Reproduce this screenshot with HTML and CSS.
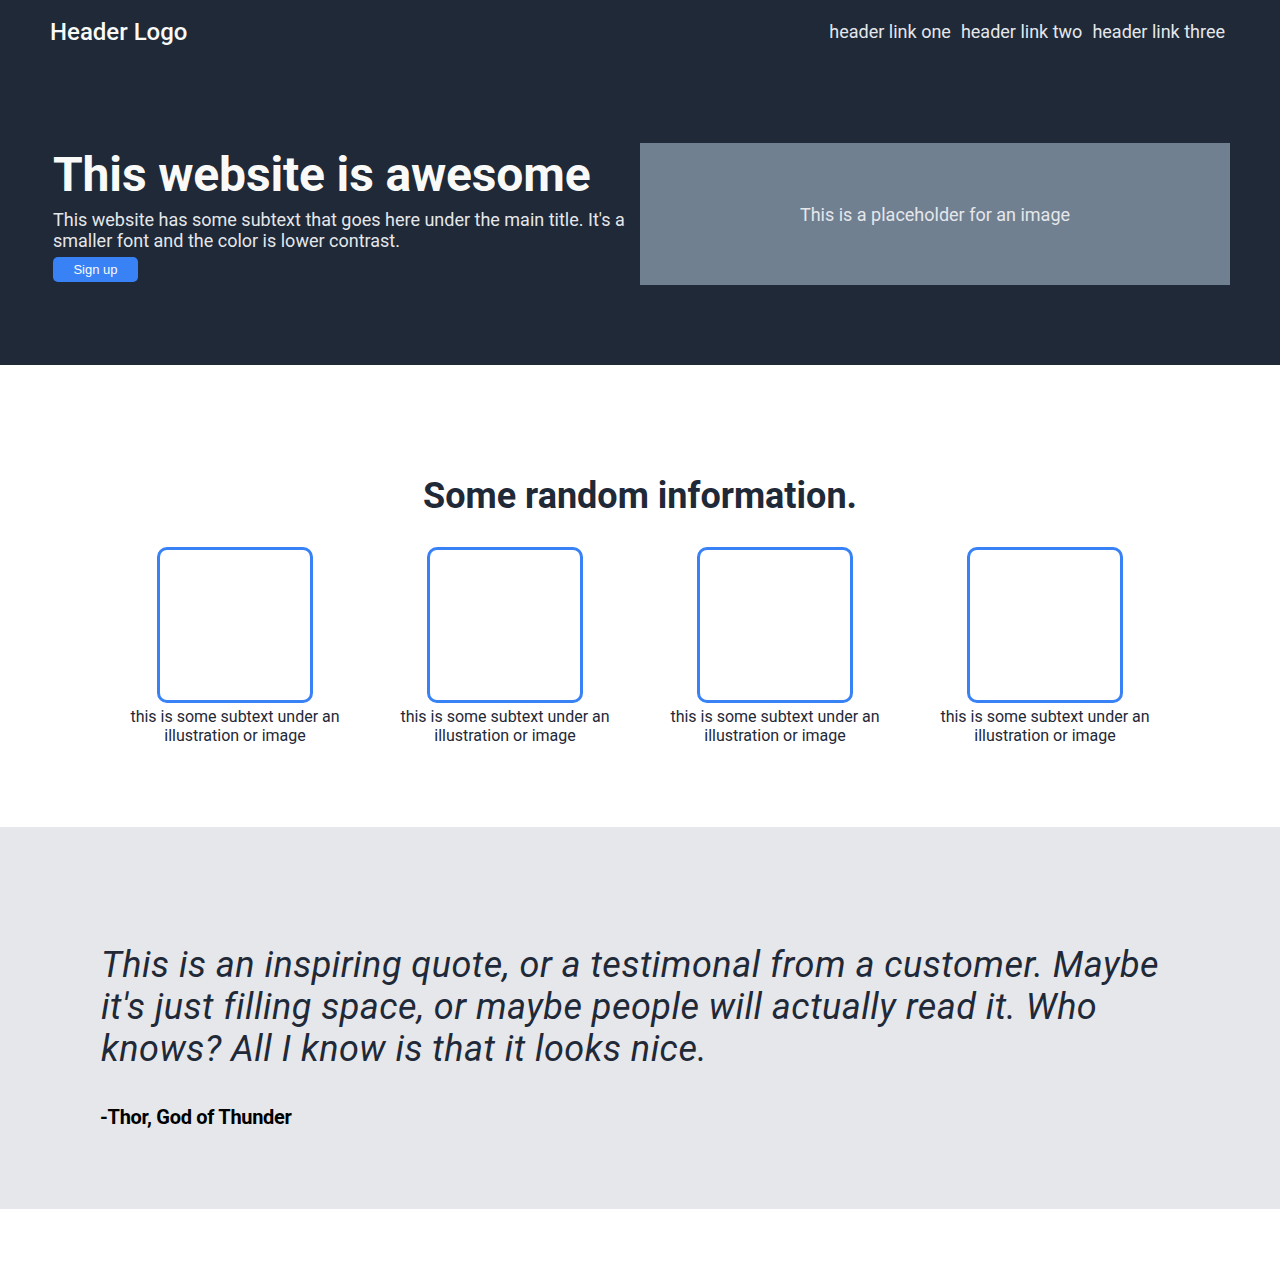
FILE: index.html
```html
<!DOCTYPE html>
<html lang="en">
<head>
<meta charset="UTF-8">
<title>Landing Page</title>
<link rel="stylesheet" href="styles.css">
</head>
<body>
<div class="top">
  <header class="header">
    <div class="logo">Header Logo</div>
    <nav class="links">
      <a href="#">header link one</a>
      <a href="#">header link two</a>
      <a href="#">header link three</a>
    </nav>
  </header>
  <section class="hero">
    <div class="hero-text">
      <h1>This website is awesome</h1>
      <p>This website has some subtext that goes here under the main title. It's a smaller font and the color is lower contrast.</p>
      <button class="signup">Sign up</button>
    </div>
    <div class="placeholder">This is a placeholder for an image</div>
  </section>
</div>
<section class="info">
  <h2>Some random information.</h2>
  <div class="cards">
    <div class="card"><div class="box"></div><p>this is some subtext under an illustration or image</p></div>
    <div class="card"><div class="box"></div><p>this is some subtext under an illustration or image</p></div>
    <div class="card"><div class="box"></div><p>this is some subtext under an illustration or image</p></div>
    <div class="card"><div class="box"></div><p>this is some subtext under an illustration or image</p></div>
  </div>
</section>
<section class="quote">
  <blockquote>This is an inspiring quote, or a testimonal from a customer. Maybe it's just filling space, or maybe people will actually read it. Who knows? All I know is that it looks nice.</blockquote>
  <div class="author">-Thor, God of Thunder</div>
</section>
</body>
</html>
```

FILE: styles.css
```css
html, body {
  margin: 0;
  padding: 0;
}
body {
  font-family: Roboto, "Liberation Sans", sans-serif;
  background: #ffffff;
}
.top {
  background: #1f2937;
}
.header {
  display: flex;
  justify-content: space-between;
  align-items: center;
  height: 63px;
  padding: 0 55px 0 50px;
}
.logo {
  color: #f9faf8;
  font-size: 24px;
  font-weight: 500;
}
.links {
  display: flex;
  gap: 10px;
}
.links a {
  color: #e5e7eb;
  font-size: 18px;
  text-decoration: none;
}
.hero {
  display: flex;
  align-items: center;
  gap: 0;
  padding: 80px 50px 80px 53px;
}
.hero-text {
  flex: 1;
}
.hero-text h1 {
  margin: 0 0 6px;
  color: #f9faf8;
  font-size: 48px;
  font-weight: 700;
  letter-spacing: -0.15px;
}
.hero-text p {
  margin: 0 0 6px;
  color: #e5e7eb;
  font-size: 18px;
}
.signup {
  background: #3882f6;
  color: #f9faf8;
  border: none;
  border-radius: 5px;
  width: 85px;
  height: 25px;
  font-family: "Liberation Sans", Arial, sans-serif;
  font-size: 13px;
  padding: 0;
}
.placeholder {
  width: 590px;
  height: 142px;
  background: #708090;
  color: #e5e7eb;
  font-size: 18px;
  display: flex;
  align-items: center;
  justify-content: center;
}
.info {
  padding: 110px 0 82px;
  text-align: center;
}
.info h2 {
  margin: 0 0 30px;
  color: #1f2937;
  font-size: 36px;
  font-weight: 700;
}
.cards {
  display: flex;
  justify-content: center;
  gap: 50px;
}
.card {
  width: 220px;
  display: flex;
  flex-direction: column;
  align-items: center;
}
.box {
  width: 150px;
  height: 150px;
  border: 3px solid #3882f6;
  border-radius: 10px;
}
.card p {
  margin: 4px 0 0;
  color: #1f2937;
  font-size: 16px;
  line-height: 19px;
}
.quote {
  background: #e5e7eb;
  padding: 117px 110px 80px 101px;
}
.quote blockquote {
  margin: 0 0 35px;
  color: #1f2937;
  font-size: 36px;
  font-style: italic;
  font-weight: 400;
  line-height: 42px;
  letter-spacing: 0.5px;
}
.author {
  margin-left: -1px;
  color: #000000;
  font-size: 20px;
  font-weight: 700;
  letter-spacing: -0.3px;
}
```
